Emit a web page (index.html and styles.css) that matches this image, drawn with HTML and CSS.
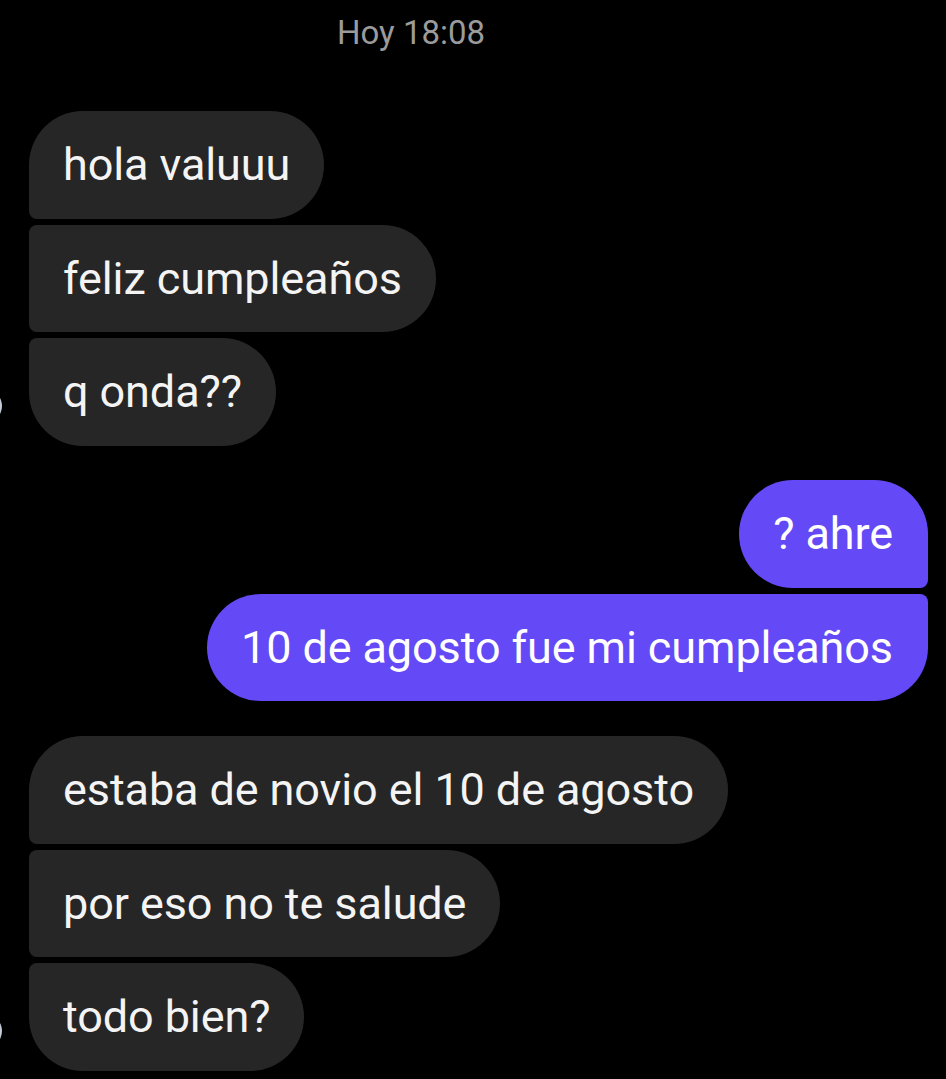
FILE: index.html
```html
<!DOCTYPE html>
<html lang="es">
<head>
<meta charset="utf-8">
<title>Chat</title>
<link rel="stylesheet" href="styles.css">
</head>
<body>
<main class="chat">
  <div class="stamp">Hoy 18:08</div>

  <section class="group in">
    <div class="bubble first">hola valuuu</div>
    <div class="bubble mid">feliz cumpleaños</div>
    <div class="row-last">
      <span class="avatar"></span>
      <div class="bubble last">q onda??</div>
    </div>
  </section>

  <section class="group out">
    <div class="bubble first">? ahre</div>
    <div class="bubble last">10 de agosto fue mi cumpleaños</div>
  </section>

  <section class="group in">
    <div class="bubble first">estaba de novio el 10 de agosto</div>
    <div class="bubble mid">por eso no te salude</div>
    <div class="row-last">
      <span class="avatar"></span>
      <div class="bubble last">todo bien?</div>
    </div>
  </section>
</main>
</body>
</html>
```

FILE: styles.css
```css
html, body {
  margin: 0;
  padding: 0;
  background: #000;
}

body {
  width: 946px;
  height: 1079px;
  overflow: hidden;
  font-family: Roboto, "Noto Sans", "Liberation Sans", sans-serif;
  -webkit-font-smoothing: antialiased;
}

.chat {
  display: flex;
  flex-direction: column;
  padding: 13px 18px 0 29px;
}

.stamp {
  align-self: flex-start;
  margin-left: 308px;
  font-size: 33px;
  line-height: 40px;
  color: #9b9b9b;
  margin-bottom: 58px;
}

.group {
  display: flex;
  flex-direction: column;
  gap: 6px;
  margin-bottom: 34.75px;
}

.group.in { align-items: flex-start; }
.group.out { align-items: flex-end; }

.row-last {
  position: relative;
  display: flex;
}

.avatar {
  position: absolute;
  left: -61px;
  top: 51px;
  width: 34px;
  height: 34px;
  border-radius: 50%;
  background: #c4ccd8;
}

.bubble {
  font-size: 45px;
  line-height: 53.5px;
  padding: 27px 34px 27px 34px;
  color: #f4f4f4;
  white-space: nowrap;
  letter-spacing: -0.1px;
}

.in .bubble {
  background: #262626;
}

.out .bubble {
  background: #6449f6;
  color: #ffffff;
  padding-right: 35px;
}

.in .first { border-radius: 54px 54px 54px 8px; }
.in .mid   { border-radius: 8px 54px 54px 8px; }
.in .last  { border-radius: 8px 54px 54px 54px; }

.out .first { border-radius: 54px 54px 8px 54px; }
.out .last  { border-radius: 54px 8px 54px 54px; }
```
